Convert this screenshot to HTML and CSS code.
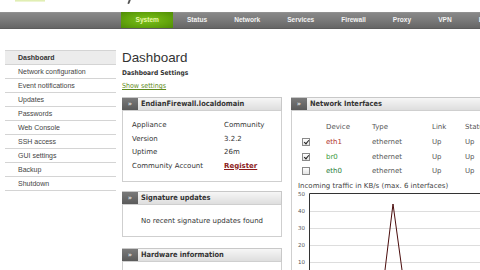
FILE: index.html
```html
<!DOCTYPE html>
<html>
<head>
<meta charset="utf-8">
<link rel="stylesheet" href="styles.css">
</head>
<body>
<div class="logo"><span class="logo-g"></span><span class="logo-d"></span></div>
<div class="nav">
  <ul class="tabs">
    <li class="tab active">System</li>
    <li class="tab">Status</li>
    <li class="tab">Network</li>
    <li class="tab">Services</li>
    <li class="tab">Firewall</li>
    <li class="tab">Proxy</li>
    <li class="tab">VPN</li>
    <li class="tab">L</li>
  </ul>
</div>
<div class="layout">
  <ul class="side">
    <li class="side-item current">Dashboard</li>
    <li class="side-item">Network configuration</li>
    <li class="side-item">Event notifications</li>
    <li class="side-item">Updates</li>
    <li class="side-item">Passwords</li>
    <li class="side-item">Web Console</li>
    <li class="side-item">SSH access</li>
    <li class="side-item">GUI settings</li>
    <li class="side-item">Backup</li>
    <li class="side-item">Shutdown</li>
  </ul>
  <div class="main">
    <h1 class="title">Dashboard</h1>
    <div class="subtitle">Dashboard Settings</div>
    <div class="showlink"><a class="green-link">Show settings</a></div>
    <div class="cols">
      <div class="col-left">
        <div class="box">
          <div class="box-head"><span class="box-icon">»</span><span class="box-title">EndianFirewall.localdomain</span></div>
          <div class="box-body info">
            <div class="info-row"><span class="info-label">Appliance</span><span>Community</span></div>
            <div class="info-row"><span class="info-label">Version</span><span>3.2.2</span></div>
            <div class="info-row"><span class="info-label">Uptime</span><span>26m</span></div>
            <div class="info-row"><span class="info-label">Community Account</span><a class="red-link">Register</a></div>
          </div>
        </div>
        <div class="box sig">
          <div class="box-head"><span class="box-icon">»</span><span class="box-title">Signature updates</span></div>
          <div class="box-body centered">No recent signature updates found</div>
        </div>
        <div class="box hw">
          <div class="box-head"><span class="box-icon">»</span><span class="box-title">Hardware information</span></div>
          <div class="box-body tall"></div>
        </div>
      </div>
      <div class="col-right">
        <div class="box">
          <div class="box-head"><span class="box-icon">»</span><span class="box-title">Network Interfaces</span></div>
          <div class="box-body net">
            <div class="if-table">
              <span></span><span>Device</span><span>Type</span><span>Link</span><span>Statu</span>
              <span class="cb on"></span><span class="dev-red">eth1</span><span>ethernet</span><span>Up</span><span>Up</span>
              <span class="cb on"></span><span class="dev-green">br0</span><span>ethernet</span><span>Up</span><span>Up</span>
              <span class="cb"></span><span class="dev-green2">eth0</span><span>ethernet</span><span>Up</span><span>Up</span>
            </div>
            <div class="chart-label">Incoming traffic in KB/s (max. 6 interfaces)</div>
            <svg class="chart" width="190" height="80" viewBox="0 0 190 80">
              <g class="grid">
                <line x1="17" y1="21.5" x2="190" y2="21.5"/>
                <line x1="17" y1="38.5" x2="190" y2="38.5"/>
                <line x1="17" y1="55.5" x2="190" y2="55.5"/>
                <line x1="17" y1="72.5" x2="190" y2="72.5"/>
              </g>
              <path class="axis" d="M17.5 80 V3.5 H190"/>
              <g class="ylab">
                <text x="13" y="6">50</text>
                <text x="13" y="23">40</text>
                <text x="13" y="40">30</text>
                <text x="13" y="57">20</text>
                <text x="13" y="74">10</text>
              </g>
              <path class="spike" d="M93 80 L101 14 L110 80"/>
            </svg>
          </div>
        </div>
      </div>
    </div>
  </div>
</div>
</body>
</html>
```

FILE: styles.css
```css
* { box-sizing: border-box; }
html, body { margin: 0; padding: 0; }
body {
  width: 480px;
  height: 270px;
  overflow: hidden;
  background: #fff;
  font-family: "DejaVu Sans", Verdana, sans-serif;
  font-size: 7px;
  color: #333;
}
.logo { height: 12px; display: flex; align-items: flex-start; }
.logo-g { margin-left: 15px; width: 30px; height: 2px; background: linear-gradient(#dbeba4, #f3f8e2); }
.logo-d { margin-left: 83px; width: 2px; height: 4px; background: #555; border-radius: 0 0 1px 1px; transform: skewX(-20deg); }
.nav {
  height: 17px;
  background: linear-gradient(#9a9a9a 0, #888 1px, #7a7a7a 50%, #666 100%);
  border-bottom: 1px solid #5c5c5c;
}
.tabs {
  list-style: none;
  margin: 0 0 0 121px;
  padding: 0;
  display: flex;
  height: 100%;
  white-space: nowrap;
}
.tab {
  padding: 0 13.5px;
  line-height: 16px;
  font-family: "Liberation Sans", Arial, sans-serif;
  font-weight: bold;
  font-size: 6.6px;
  color: #f2f2f2;
}
.tab.active {
  padding: 0 14.5px;
  background: radial-gradient(ellipse at 50% 50%, #7cc21c 0, #62a40c 60%, #4f8c06 100%);
  color: #e8f7a8;
}
.layout { display: flex; align-items: flex-start; }
.side {
  list-style: none;
  margin: 21px 0 0 5px;
  padding: 0;
  width: 111px;
  flex: none;
  border-top: 1px solid #d4d4d4;
  font-family: "Liberation Sans", Arial, sans-serif;
  font-size: 7px;
  color: #444;
}
.side-item {
  height: 14px;
  line-height: 13px;
  padding-left: 13px;
  border-bottom: 1px solid #d4d4d4;
  white-space: nowrap;
}
.side-item.current { background: #ececec; font-weight: bold; color: #333; }
.main { margin-left: 6px; flex: none; width: 358px; }
.title {
  margin: 20px 0 0 0;
  font-family: "Liberation Sans", Arial, sans-serif;
  font-weight: normal;
  font-size: 13.4px;
  line-height: 17px;
  height: 17px;
  color: #333;
}
.subtitle {
  font-family: "DejaVu Sans Condensed", "DejaVu Sans", sans-serif;
  font-weight: bold;
  font-size: 6.6px;
  line-height: 14px;
  height: 14px;
  color: #333;
}
.showlink { line-height: 12px; height: 12px; }
.green-link {
  font-family: "DejaVu Sans Condensed", "DejaVu Sans", sans-serif;
  color: #5f8a1c;
  text-decoration: underline;
  font-size: 7px;
}
.cols { display: flex; gap: 9px; margin-top: 5px; }
.col-left { width: 160px; flex: none; }
.col-right { width: 200px; flex: none; }
.box { border: 1px solid #cfcfcf; border-top: none; }
.box-head {
  height: 14px;
  display: flex;
  align-items: stretch;
  background: linear-gradient(#f6f6f6, #dedede);
  border-top: 1px solid #c8c8c8;
  border-bottom: 1px solid #cfcfcf;
  margin: 0 -1px;
  border-right: 1px solid #c8c8c8;
}
.box-icon {
  width: 16px;
  flex: none;
  background: linear-gradient(#7a7a7a, #5a5a5a);
  color: #fff;
  font-size: 7px;
  line-height: 12px;
  text-align: center;
}
.box-title {
  padding-left: 3px;
  font-family: "DejaVu Sans Condensed", "DejaVu Sans", sans-serif;
  font-weight: bold;
  font-size: 7.4px;
  line-height: 12px;
  color: #333;
  white-space: nowrap;
}
.box-body { background: #fff; }
.info { padding: 8px 0 8px 9px; }
.info-row { display: flex; line-height: 13.6px; height: 13.6px; }
.info-label { width: 92px; flex: none; }
.red-link { color: #8c1c1c; font-weight: bold; text-decoration: underline; }
.sig { margin-top: 9px; }
.centered { text-align: center; line-height: 14px; padding: 9px 0 8px; }
.hw { margin-top: 11px; }
.tall { height: 20px; }
.net { padding: 9px 0 0 10px; height: 170px; }
.if-table {
  display: grid;
  grid-template-columns: 24px 46px 60px 33px 40px;
  grid-auto-rows: 14.7px;
  align-items: center;
  color: #555;
  white-space: nowrap;
}
.cb {
  width: 8px;
  height: 8px;
  border: 1px solid #8a8a8a;
  background: linear-gradient(#fff, #e4e4e4);
  position: relative;
}
.cb.on::after {
  content: "";
  position: absolute;
  left: 1.5px;
  top: 0px;
  width: 2px;
  height: 4px;
  border-right: 1.2px solid #222;
  border-bottom: 1.2px solid #222;
  transform: rotate(40deg);
}
.dev-red { color: #b0342c; }
.dev-green { color: #3b9a3b; }
.dev-green2 { color: #2b7d3b; }
.chart-label { margin: 1px 0 0 -4px; line-height: 12px; color: #444; white-space: nowrap; }
.chart { display: block; margin-left: -10px; margin-top: -2px; overflow: hidden; }
.grid line { stroke: #dddddd; stroke-width: 1; }
.axis { fill: none; stroke: #333; stroke-width: 1; }
.ylab text { font-family: "DejaVu Sans", sans-serif; font-size: 5.5px; fill: #555; text-anchor: end; }
.spike { fill: none; stroke: #4a0c0c; stroke-width: 1; }
```
